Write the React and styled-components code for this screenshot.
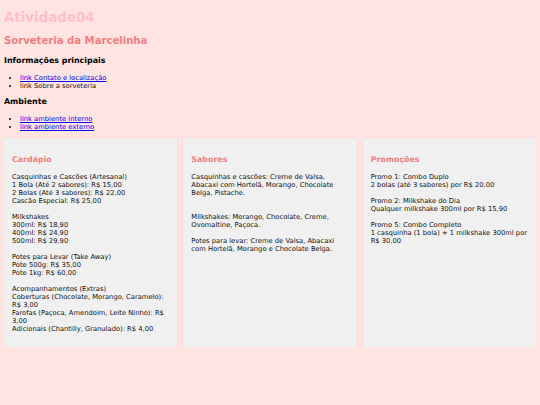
import React from "react"
import styled, { createGlobalStyle } from "styled-components"

const GlobalStyle = createGlobalStyle`
  html {
    background: #ffe4e1;
  }
  body {
    margin: 4px;
    background: #ffe4e1;
    font-family: Verdana, "DejaVu Sans", sans-serif;
    font-size: 6.75px;
    line-height: 8px;
    color: #111;
  }
`

const Title = styled.h1`
  font-size: 13.4px;
  line-height: 16px;
  margin: 6px 0 9px;
  color: pink;
`

const Subtitle = styled.h2`
  font-size: 10.1px;
  line-height: 12px;
  margin: 9px 0 9px;
  color: lightcoral;
`

const Section = styled.h3`
  font-size: 7.9px;
  line-height: 10px;
  margin: 7px 0 8px;
  color: #000;
`

const CardTitle = styled.h3`
  font-size: 7.9px;
  line-height: 10px;
  margin: 9px 0 7px;
  color: lightcoral;
`

const List = styled.ul`
  margin: 7px 0;
  padding-left: 16px;
`

const Link = styled.a`
  color: #0000ee;
  text-decoration: underline;
`

const Cards = styled.div`
  display: grid;
  grid-template-columns: repeat(3, 1fr);
  gap: 6px;
`

const Card = styled.div`
  background: #f0f0f0;
  padding: 8px 8px 6px;
  box-shadow: 0 0 2px rgba(240, 128, 128, 0.25);
`

const Text = styled.p`
  margin: 8px 0;
`

export default function App() {
  return (
    <>
      <GlobalStyle />
      <Title>Atividade04</Title>
      <Subtitle>Sorveteria da Marcelinha</Subtitle>

      <Section>Informações principais</Section>
      <List>
        <li><Link href="#">link Contato e localização</Link></li>
        <li>link Sobre a sorveteria</li>
      </List>

      <Section>Ambiente</Section>
      <List>
        <li><Link href="#">link ambiente interno</Link></li>
        <li><Link href="#">link ambiente externo</Link></li>
      </List>

      <Cards>
        <Card>
          <CardTitle>Cardápio</CardTitle>
          <Text>
            Casquinhas e Cascões (Artesanal)<br />
            1 Bola (Até 2 sabores): R$ 15,00<br />
            2 Bolas (Até 3 sabores): R$ 22,00<br />
            Cascão Especial: R$ 25,00
          </Text>
          <Text>
            Milkshakes<br />
            300ml: R$ 18,90<br />
            400ml: R$ 24,90<br />
            500ml: R$ 29,90
          </Text>
          <Text>
            Potes para Levar (Take Away)<br />
            Pote 500g: R$ 35,00<br />
            Pote 1kg: R$ 60,00
          </Text>
          <Text>
            Acompanhamentos (Extras)<br />
            Coberturas (Chocolate, Morango, Caramelo): R$ 3,00<br />
            Farofas (Paçoca, Amendoim, Leite Ninho): R$ 3,00<br />
            Adicionais (Chantilly, Granulado): R$ 4,00
          </Text>
        </Card>

        <Card>
          <CardTitle>Sabores</CardTitle>
          <Text>
            Casquinhas e cascões: Creme de Valsa, Abacaxi com Hortelã, Morango, Chocolate Belga, Pistache.<br />
            <br />
          </Text>
          <Text>Milkshakes: Morango, Chocolate, Creme, Ovomaltine, Paçoca.</Text>
          <Text>Potes para levar: Creme de Valsa, Abacaxi com Hortelã, Morango e Chocolate Belga.</Text>
        </Card>

        <Card>
          <CardTitle>Promoções</CardTitle>
          <Text>
            Promo 1: Combo Duplo<br />
            2 bolas (até 3 sabores) por R$ 20,00
          </Text>
          <Text>
            Promo 2: Milkshake do Dia<br />
            Qualquer milkshake 300ml por R$ 15,90
          </Text>
          <Text>
            Promo 5: Combo Completo<br />
            1 casquinha (1 bola) + 1 milkshake 300ml por R$ 30,00
          </Text>
        </Card>
      </Cards>
    </>
  )
}
